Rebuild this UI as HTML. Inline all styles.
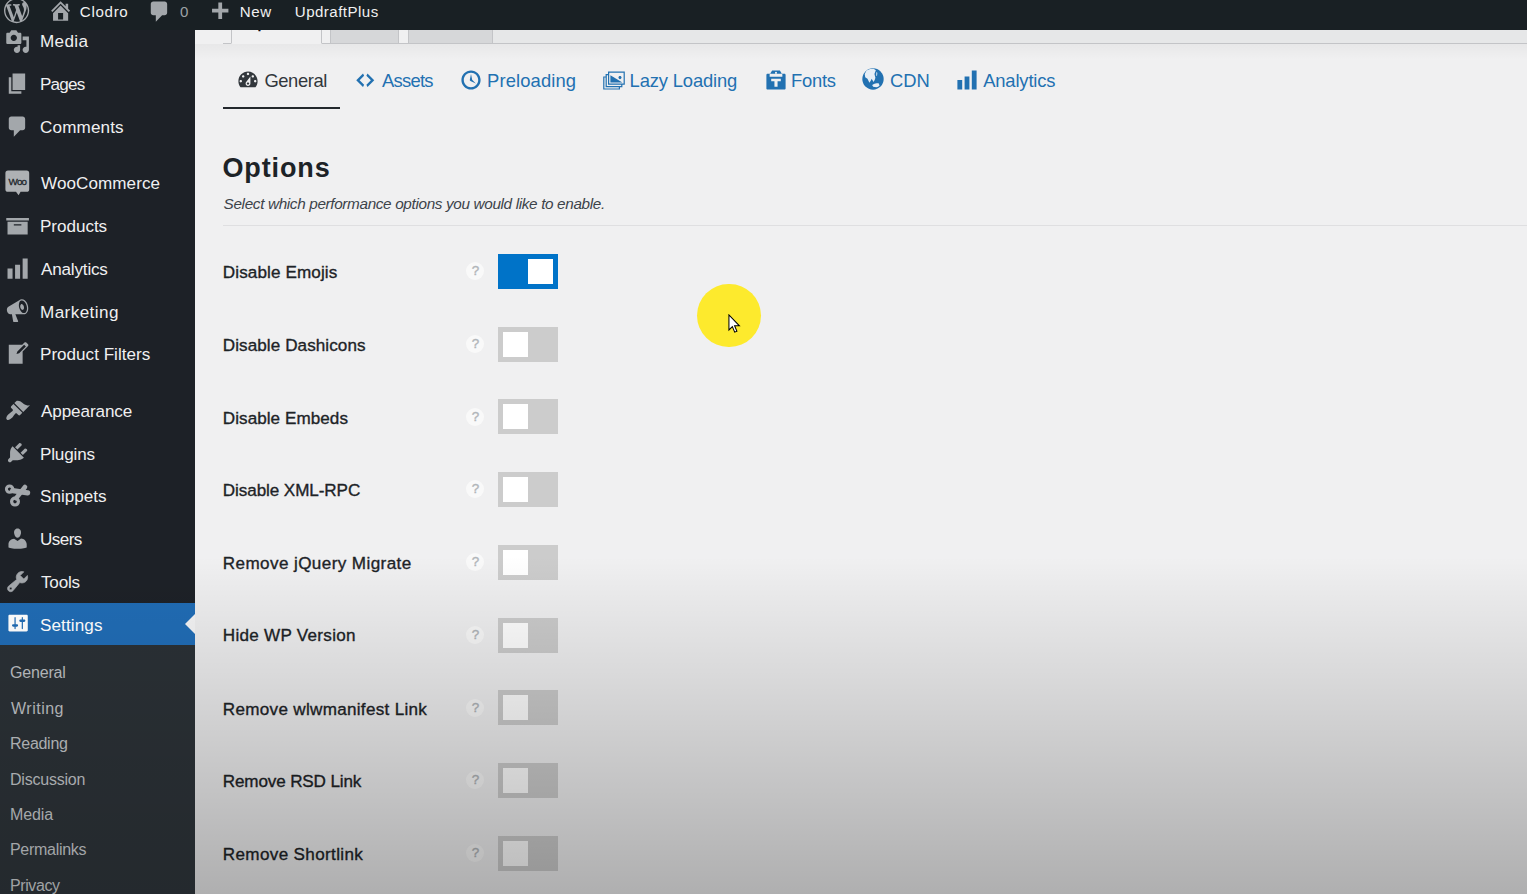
<!DOCTYPE html>
<html lang="en"><head><meta charset="utf-8"><title>Perfmatters &lsaquo; Clodro &mdash; WordPress</title>
<style>
*{box-sizing:border-box;margin:0;padding:0}
html,body{width:1527px;height:894px;overflow:hidden;background:#f0f0f1;font-family:"Liberation Sans",Arial,sans-serif}
#wrap{position:relative;width:1527px;height:894px;overflow:hidden}
.t{position:absolute;white-space:nowrap;line-height:1}
.i{position:absolute;display:block;overflow:visible}
#adminbar{position:absolute;left:0;top:0;width:1527px;height:29.7px;background:#192024;z-index:5}
#menu{position:absolute;left:0;top:0;width:195px;height:894px;background:#1d2127;z-index:3}
#submenu{position:absolute;left:0;top:644.6px;width:195px;height:260px;background:#2a3035}
.cur{position:absolute;left:0;width:195px;height:42px;background:#206bb3}
.arrow{position:absolute;left:185px;width:0;height:0;border:10.2px solid transparent;border-left-width:0;border-right:10px solid #f0f0f1}
#content{position:absolute;left:0;top:0;width:1527px;height:894px;z-index:1}
.tabline{position:absolute;left:222.7px;top:43px;width:1310px;height:1.3px;background:#c3c4c7}
.ntab{position:absolute;top:10px;height:34.3px;border:1.3px solid #c3c4c7;background:#d6d7d9;color:#50575e;font-size:17.2px;line-height:22.5px;padding-left:12px;white-space:nowrap;overflow:hidden;-webkit-text-stroke:.4px #50575e}
.ntab.act{background:#f0f0f1;border-bottom-color:#f0f0f1;color:#000;-webkit-text-stroke:.4px #000}
.strip{position:absolute;left:493px;top:29px;width:1040px;height:14px;background:#e6e7e8}
.tabsh{position:absolute;left:195px;top:44.3px;width:1340px;height:16px;background:linear-gradient(to bottom,rgba(0,0,0,.035),rgba(0,0,0,0))}
.uline{position:absolute;left:222.9px;top:106.8px;width:117.3px;height:2.5px;background:#23282d}
.hr{position:absolute;left:222.7px;top:224.7px;width:1310px;height:1.3px;background:#dfdfe1}
.q{position:absolute;left:466.4px;width:18px;height:18px;border-radius:50%;background:#f9f9f9;color:#b1b5b9;font-size:13.4px;line-height:18.4px;text-align:center;-webkit-text-stroke:.4px #b1b5b9}
.tg{position:absolute;left:498.1px;width:59.9px;height:35.2px;background:#cccccc}
.tg i{position:absolute;left:5px;top:5px;width:25.1px;height:25.1px;background:#fff}
.tg.on{background:#0073c8}
.tg.on i{left:29.9px}
#mouse{position:absolute;left:697px;top:283.7px;width:63.6px;height:63.6px;border-radius:50%;background:#fdea2d;z-index:2}
#ptr{position:absolute;left:728px;top:314.4px;z-index:2}
#shade{position:absolute;left:195px;top:0;width:1332px;height:894px;z-index:9;pointer-events:none;background:linear-gradient(to bottom,rgba(0,0,0,0) 556px,rgba(0,0,0,.27) 894px)}
#shade2{position:absolute;left:0;top:0;width:195px;height:894px;z-index:9;pointer-events:none;background:linear-gradient(to bottom,rgba(0,0,0,0) 556px,rgba(0,0,0,.14) 894px)}
</style></head>
<body><div id="wrap">
<div id="content">
<div class="strip"></div><div class="tabline"></div><div class="tabsh"></div>
<div class="ntab act" style="left:231.2px;width:90.8px">Options</div>
<div class="ntab" style="left:330px;width:69px">Tools</div>
<div class="ntab" style="left:408.2px;width:84.5px">License</div>
<div class="uline"></div>
<svg class="i" style="left:235.70px;top:67.80px" width="24" height="24" viewBox="0 0 20 20" fill="#32373c" fill-rule="evenodd"><path d="M3.76 16h12.48c1.1-1.37 1.76-3.11 1.76-5 0-4.42-3.58-8-8-8s-8 3.58-8 8c0 1.89.66 3.63 1.76 5zM10 4c.55 0 1 .45 1 1s-.45 1-1 1-1-.45-1-1 .45-1 1-1zM6 6c.55 0 1 .45 1 1s-.45 1-1 1-1-.45-1-1 .45-1 1-1zm8 0c.55 0 1 .45 1 1s-.45 1-1 1-1-.45-1-1 .45-1 1-1zm-5.37 5.55L12 7v6c0 1.1-.9 2-2 2s-2-.9-2-2c0-.57.24-1.08.63-1.45zM4 10c.55 0 1 .45 1 1s-.45 1-1 1-1-.45-1-1 .45-1 1-1zm12 0c.55 0 1 .45 1 1s-.45 1-1 1-1-.45-1-1 .45-1 1-1zm-5 3c0-.55-.45-1-1-1s-1 .45-1 1 .45 1 1 1 1-.45 1-1z"/></svg>
<span class="t" id="t0" style="left:264.40px;top:71.72px;font-size:18.4px;color:#32373c;letter-spacing:-0.400px;">General</span>
<svg class="i" style="left:353.85px;top:68.95px" width="22.5" height="22.5" viewBox="0 0 20 20" fill="#2271b1" fill-rule="evenodd"><path d="M9 6l-4 4 4 4-1 2-6-6 6-6zm2 8l4-4-4-4 1-2 6 6-6 6z"/></svg>
<span class="t" id="t1" style="left:382.00px;top:71.72px;font-size:18.4px;color:#2271b1;letter-spacing:-0.740px;">Assets</span>
<svg class="i" style="left:459.10px;top:67.70px" width="24" height="24" viewBox="0 0 20 20" fill="#2271b1" fill-rule="evenodd"><path d="M10 2c4.42 0 8 3.58 8 8s-3.58 8-8 8-8-3.58-8-8 3.58-8 8-8zm0 14c3.31 0 6-2.69 6-6s-2.69-6-6-6-6 2.69-6 6 2.69 6 6 6zm-.71-5.29c.07.05.14.1.23.15l-.02.02L14 13l-3.03-3.19L10 5l-.97 4.81h.01c0 .02-.01.05-.02.09S9 9.97 9 10c0 .28.1.52.29.71z"/></svg>
<span class="t" id="t2" style="left:487.00px;top:71.72px;font-size:18.4px;color:#2271b1;letter-spacing:0.122px;">Preloading</span>
<svg class="i" style="left:602.10px;top:67.90px" width="24" height="24" viewBox="0 0 20 20" fill="#2271b1" fill-rule="evenodd"><path d="M5 3h14v11h-2v2h-2v2H1V7h2V5h2V3zm13 10V4H6v9h12zm-3-3.700c.72 0 1.300-.58 1.300-1.300s-.58-1.300-1.300-1.300-1.300.58-1.300 1.300.58 1.300 1.300 1.300zm1 5.700v-1H5V6H4v9h12zM7 6l10 6H7V6zm7 11v-1H3V8H2v9h12z"/></svg>
<span class="t" id="t3" style="left:629.60px;top:71.72px;font-size:18.4px;color:#2271b1;letter-spacing:-0.155px;">Lazy Loading</span>
<svg class="i" style="left:764.00px;top:67.70px" width="24" height="24" viewBox="0 0 20 20" fill="#2271b1" fill-rule="evenodd"><path d="M3 4.8h14c.55 0 1 .45 1 1V17c0 .55-.45 1-1 1H3c-.55 0-1-.45-1-1V5.8c0-.55.45-1 1-1zM4.700 5.900v1.300h10.600V5.900zM6 8.900v2.100h2.700v4.700h2.600V11H14V8.900z M7.200 2h5.600c.3 0 .5.100.7.400l2 3.500H4.500l2-3.500c.2-.3.400-.400.700-.400zM10 3.100a.85.85 0 1 0 0 1.700.85.85 0 0 0 0-1.700z"/></svg>
<span class="t" id="t4" style="left:791.00px;top:71.72px;font-size:18.4px;color:#2271b1;letter-spacing:-0.250px;">Fonts</span>
<svg class="i" style="left:860.7px;top:66.7px" width="24" height="24" viewBox="0 0 20 20"><circle cx="10" cy="10" r="8.9" fill="#2271b1"/><path d="M3.1 5.8L4.6 2.9 7.5 1.6l3-.2 1.9 1.3-.6 1.500-.6 1.600.4 1.500.4 1.600-.5 1.800-1 1.700-.9-1.300-.7-1.400-.8 1.700-1.100 1.800-.8-1.700-.8-1.800-1.300-.700-.6-.500z M9.300 15.100l1.900-1.100 1.800-.5 1.700.1.800 1.900-1.200 1-1.500.3-2.700-.3z M12.800 4.200l.8.6-.2 2.200-.7.600z" fill="#e6eef6"/></svg>
<span class="t" id="t5" style="left:890.00px;top:71.72px;font-size:18.4px;color:#2271b1;letter-spacing:0.000px;">CDN</span>
<svg class="i" style="left:954.80px;top:67.90px" width="24" height="24" viewBox="0 0 20 20" fill="#2271b1" fill-rule="evenodd"><path d="M18 18V2h-4v16h4zm-6 0V7H8v11h4zm-6 0v-8H2v8h4z"/></svg>
<span class="t" id="t6" style="left:983.14px;top:71.72px;font-size:18.4px;color:#2271b1;letter-spacing:-0.147px;">Analytics</span>
<span class="t" id="h" style="left:222.40px;top:155.44px;font-size:27.0px;color:#1d2327;letter-spacing:0.887px;font-weight:700;">Options</span>
<span class="t" id="d" style="left:223.60px;top:196.35px;font-size:15.3px;color:#3c434a;letter-spacing:-0.346px;font-style:italic;">Select which performance options you would like to enable.</span>
<span class="t" id="r0" style="left:222.80px;top:263.82px;font-size:17.1px;color:#1d2327;letter-spacing:0.108px;-webkit-text-stroke:0.35px #1d2327;">Disable Emojis</span>
<span class="q" style="top:262.0px">?</span>
<div class="tg on" style="top:253.8px"><i></i></div>
<span class="t" id="r1" style="left:222.80px;top:336.82px;font-size:17.1px;color:#1d2327;letter-spacing:0.075px;-webkit-text-stroke:0.35px #1d2327;">Disable Dashicons</span>
<span class="q" style="top:334.8px">?</span>
<div class="tg" style="top:326.6px"><i></i></div>
<span class="t" id="r2" style="left:222.80px;top:409.82px;font-size:17.1px;color:#1d2327;letter-spacing:0.054px;-webkit-text-stroke:0.35px #1d2327;">Disable Embeds</span>
<span class="q" style="top:407.5px">?</span>
<div class="tg" style="top:399.3px"><i></i></div>
<span class="t" id="r3" style="left:222.80px;top:481.82px;font-size:17.1px;color:#1d2327;letter-spacing:-0.086px;-webkit-text-stroke:0.35px #1d2327;">Disable XML-RPC</span>
<span class="q" style="top:480.2px">?</span>
<div class="tg" style="top:472.1px"><i></i></div>
<span class="t" id="r4" style="left:222.80px;top:554.82px;font-size:17.1px;color:#1d2327;letter-spacing:0.395px;-webkit-text-stroke:0.35px #1d2327;">Remove jQuery Migrate</span>
<span class="q" style="top:553.0px">?</span>
<div class="tg" style="top:544.8px"><i></i></div>
<span class="t" id="r5" style="left:222.80px;top:626.82px;font-size:17.1px;color:#1d2327;letter-spacing:0.271px;-webkit-text-stroke:0.35px #1d2327;">Hide WP Version</span>
<span class="q" style="top:625.8px">?</span>
<div class="tg" style="top:617.5px"><i></i></div>
<span class="t" id="r6" style="left:222.80px;top:700.82px;font-size:17.1px;color:#1d2327;letter-spacing:0.295px;-webkit-text-stroke:0.35px #1d2327;">Remove wlwmanifest Link</span>
<span class="q" style="top:698.5px">?</span>
<div class="tg" style="top:690.3px"><i></i></div>
<span class="t" id="r7" style="left:222.80px;top:772.82px;font-size:17.1px;color:#1d2327;letter-spacing:-0.150px;-webkit-text-stroke:0.35px #1d2327;">Remove RSD Link</span>
<span class="q" style="top:771.2px">?</span>
<div class="tg" style="top:763.0px"><i></i></div>
<span class="t" id="r8" style="left:222.80px;top:845.82px;font-size:17.1px;color:#1d2327;letter-spacing:0.340px;-webkit-text-stroke:0.35px #1d2327;">Remove Shortlink</span>
<span class="q" style="top:844.0px">?</span>
<div class="tg" style="top:835.8px"><i></i></div>
<div class="hr"></div>
<div id="mouse"></div>
<svg id="ptr" width="13" height="19.5" viewBox="0 0 14 21"><path d="M1 1v16.2l3.7-3.6 2.5 5.9 2.4-1-2.500-5.800h5.200z" fill="#fff" stroke="#000" stroke-width="1.1" stroke-linejoin="miter"/></svg>
</div>
<div id="menu">
<div id="submenu"></div>
<svg class="i" style="left:4.50px;top:28.70px" width="25.2" height="25.2" viewBox="0 0 20 20" fill="#a3a7ab" fill-rule="evenodd"><path d="M13 11V4c0-.55-.45-1-1-1h-1.67L9 1H5L3.67 3H2c-.55 0-1 .45-1 1v7c0 .55.45 1 1 1h10c.55 0 1-.45 1-1zM7 4.5c1.38 0 2.5 1.12 2.5 2.5S8.38 9.5 7 9.5 4.5 8.38 4.5 7 5.62 4.5 7 4.5zM14 6h5v10.5c0 1.38-1.12 2.5-2.5 2.5S14 17.88 14 16.5s1.12-2.5 2.5-2.5c.17 0 .34.02.5.05V9h-3V6zm-4 8.05V13h2v3.5c0 1.38-1.12 2.5-2.5 2.5S7 17.88 7 16.5 8.12 14 9.5 14c.17 0 .34.02.5.05z"/></svg>
<span class="t" id="m0" style="left:40.00px;top:32.82px;font-size:17.1px;color:#f0f0f1;letter-spacing:0.350px;">Media</span>
<svg class="i" style="left:4.50px;top:70.80px" width="25.2" height="25.2" viewBox="0 0 20 20" fill="#a3a7ab" fill-rule="evenodd"><path d="M6 15V2h10v13H6zm-1 1h8v2H3V5h2v11z"/></svg>
<span class="t" id="m1" style="left:40.00px;top:75.82px;font-size:17.1px;color:#f0f0f1;letter-spacing:-0.798px;">Pages</span>
<svg class="i" style="left:4.50px;top:113.60px" width="25.2" height="25.2" viewBox="0 0 20 20" fill="#a3a7ab" fill-rule="evenodd"><path d="M5 2h9c1.1 0 2 .9 2 2v7c0 1.1-.9 2-2 2h-2l-5 5v-5H5c-1.1 0-2-.9-2-2V4c0-1.1.9-2 2-2z"/></svg>
<span class="t" id="m2" style="left:40.00px;top:118.82px;font-size:17.1px;color:#f0f0f1;letter-spacing:0.143px;">Comments</span>
<svg class="i" style="left:5.2px;top:169.5px" width="25" height="26" viewBox="0 0 25 26"><path d="M3 .6h18.6a2.6 2.6 0 0 1 2.6 2.6v16a2.6 2.6 0 0 1-2.6 2.6h-6l-2 3.4-2.6-3.4H3a2.6 2.6 0 0 1-2.6-2.6v-16A2.6 2.6 0 0 1 3 .6z" fill="#aeb1b4"/><text x="12.400" y="14.500" text-anchor="middle" font-family="Liberation Sans, sans-serif" font-weight="400" font-size="9.800" letter-spacing="-0.800" stroke="#20262b" stroke-width=".3" fill="#20262b">Woo</text></svg>
<span class="t" id="m3" style="left:41.00px;top:174.82px;font-size:17.1px;color:#f0f0f1;letter-spacing:0.060px;">WooCommerce</span>
<svg class="i" style="left:4.50px;top:213.20px" width="25.2" height="25.2" viewBox="0 0 20 20" fill="#a3a7ab" fill-rule="evenodd"><path d="M19 4v2H1V4h18zM2 7h16v10H2V7zm11 3V9H7v1h6z"/></svg>
<span class="t" id="m4" style="left:40.00px;top:217.82px;font-size:17.1px;color:#f0f0f1;letter-spacing:-0.043px;">Products</span>
<svg class="i" style="left:4.50px;top:255.80px" width="25.2" height="25.2" viewBox="0 0 20 20" fill="#a3a7ab" fill-rule="evenodd"><path d="M18 18V2h-4v16h4zm-6 0V7H8v11h4zm-6 0v-8H2v8h4z"/></svg>
<span class="t" id="m5" style="left:41.00px;top:260.82px;font-size:17.1px;color:#f0f0f1;letter-spacing:-0.188px;">Analytics</span>
<svg class="i" style="left:4.50px;top:297.80px" width="25.2" height="25.2" viewBox="0 0 20 20" fill="#a3a7ab" fill-rule="evenodd"><path d="M18.15 5.94c.46 1.62.38 3.22-.02 4.48-.42 1.28-1.26 2.18-2.3 2.48-.16.06-.26.06-.4.06-.06.02-.12.02-.18.02-.06.02-.14.02-.22.02h-6.8l2.22 5.5c.02.14-.06.26-.14.34-.08.1-.24.16-.34.16H6.95c-.1 0-.26-.06-.34-.16-.08-.08-.16-.2-.14-.34l-1-5.5H4.25l-.02-.02c-.5.06-1.08-.18-1.54-.62s-.88-1.08-1.06-1.88c-.24-.8-.2-1.56-.02-2.2.18-.62.58-1.08 1.06-1.3l.02-.02 9-5.4c.1-.06.18-.1.24-.16.06-.04.14-.08.24-.12.16-.08.28-.12.5-.18 1.04-.3 2.24.1 3.22.98s1.84 2.24 2.26 3.86zm-2.58 5.98h-.02c.4-.1.74-.34 1.04-.7.58-.7.86-1.76.86-3.04 0-.64-.1-1.3-.28-1.98-.34-1.36-1.02-2.5-1.78-3.24s-1.68-1.1-2.46-.88c-.82.22-1.4.96-1.7 2-.32 1.04-.28 2.36.06 3.72.38 1.36 1 2.5 1.8 3.24.78.74 1.62 1.1 2.48.88zm-2.54-7.08c.22-.04.42-.02.62.04.38.16.76.48 1.02 1s.42 1.2.42 1.78c0 .3-.04.56-.12.8-.18.48-.44.84-.86.94-.34.1-.8-.06-1.14-.4s-.64-.86-.78-1.5c-.18-.62-.12-1.24.02-1.72s.48-.84.82-.94z"/></svg>
<span class="t" id="m6" style="left:40.00px;top:303.82px;font-size:17.1px;color:#f0f0f1;letter-spacing:0.425px;">Marketing</span>
<svg class="i" style="left:4.50px;top:341.20px" width="25.2" height="25.2" viewBox="0 0 20 20" fill="#a3a7ab" fill-rule="evenodd"><path d="M16.89 1.2l1.41 1.41c.39.39.39 1.02 0 1.41L14 8.33V18H3V3h10.67l1.8-1.8c.4-.39 1.03-.4 1.42 0zm-5.66 8.48l5.37-5.36-1.42-1.42-5.36 5.37-.71 2.12z"/></svg>
<span class="t" id="m7" style="left:40.00px;top:345.82px;font-size:17.1px;color:#f0f0f1;letter-spacing:0.000px;">Product Filters</span>
<svg class="i" style="left:4.50px;top:397.80px" width="25.2" height="25.2" viewBox="0 0 20 20" fill="#a3a7ab" fill-rule="evenodd"><path d="M14.48 11.06L7.41 3.99l1.5-1.5c.5-.56 2.3-.47 3.51.32 1.21.8 1.43 1.28 2.91 2.1 1.18.64 2.45 1.26 4.45.85zm-.71.71L6.7 4.7 4.93 6.47c-.39.39-.39 1.02 0 1.41l1.06 1.06c.39.39.39 1.03 0 1.42-.6.6-1.43 1.11-2.21 1.69-.35.26-.7.53-1.01.84C1.43 14.23.4 16.08 1.4 17.07c.99 1 2.84-.03 4.18-1.36.31-.31.58-.66.85-1.02.57-.78 1.08-1.61 1.69-2.21.39-.39 1.02-.39 1.41 0l1.06 1.06c.39.39 1.02.39 1.41 0z"/></svg>
<span class="t" id="m8" style="left:41.00px;top:402.82px;font-size:17.1px;color:#f0f0f1;letter-spacing:-0.100px;">Appearance</span>
<svg class="i" style="left:4.50px;top:439.90px" width="25.2" height="25.2" viewBox="0 0 20 20" fill="#a3a7ab" fill-rule="evenodd"><path d="M13.11 4.36L9.87 7.6 8 5.73l3.24-3.24c.35-.34 1.05-.2 1.56.32.52.51.66 1.21.31 1.55zm-8 1.77l.91-1.12 9.01 9.01-1.19.84c-.71.71-2.63 1.16-3.82 1.16H6.14L4.9 17.26c-.59.59-1.54.59-2.12 0-.59-.58-.59-1.53 0-2.12l1.24-1.24v-3.88c0-1.13.4-3.19 1.09-3.89zm7.26 3.97l3.24-3.24c.34-.35 1.04-.21 1.55.31.52.51.66 1.21.31 1.55l-3.24 3.25z"/></svg>
<span class="t" id="m9" style="left:40.00px;top:445.82px;font-size:17.1px;color:#f0f0f1;letter-spacing:-0.167px;">Plugins</span>
<svg class="i" style="left:0;top:475.0px" width="40" height="40" viewBox="0 0 40 40" fill="none" stroke="#a3a7ab"><circle cx="9.6" cy="14.1" r="3.2" stroke-width="3"/><circle cx="15" cy="26.6" r="3.400" stroke-width="3.200"/><path d="M12.600 15.600L27.600 17.900" stroke-width="5.200" stroke-linecap="round"/><path d="M16.200 23.200L25 12" stroke-width="4.600" stroke-linecap="round"/></svg>
<span class="t" id="m10" style="left:40.00px;top:487.82px;font-size:17.1px;color:#f0f0f1;letter-spacing:0.000px;">Snippets</span>
<svg class="i" style="left:4.50px;top:526.40px" width="25.2" height="25.2" viewBox="0 0 20 20" fill="#a3a7ab" fill-rule="evenodd"><path d="M10 9.25c-2.27 0-2.73-3.44-2.73-3.44C7 4.02 7.82 2 9.97 2c2.16 0 2.98 2.02 2.71 3.81 0 0-.41 3.44-2.68 3.44zm0 2.57L12.72 10c2.39 0 4.52 2.33 4.52 4.53v2.49s-3.65 1.13-7.24 1.13c-3.65 0-7.24-1.13-7.24-1.13v-2.49c0-2.25 1.94-4.48 4.47-4.48z"/></svg>
<span class="t" id="m11" style="left:40.00px;top:530.82px;font-size:17.1px;color:#f0f0f1;letter-spacing:-0.575px;">Users</span>
<svg class="i" style="left:4.50px;top:568.60px" width="25.2" height="25.2" viewBox="0 0 20 20" fill="#a3a7ab" fill-rule="evenodd" stroke="#a3a7ab" stroke-width=".55"><path d="M16.68 9.77c-1.34 1.34-3.3 1.67-4.95.99l-5.41 6.52c-.99.99-2.59.99-3.58 0s-.99-2.59 0-3.57l6.52-5.42c-.68-1.65-.35-3.61.99-4.95 1.28-1.28 3.12-1.62 4.72-1.06l-2.89 2.89 2.82 2.82 2.86-2.87c.53 1.58.18 3.39-1.08 4.65zM3.81 16.21c.4.39 1.04.39 1.43 0 .4-.4.4-1.04 0-1.43-.39-.4-1.03-.4-1.43 0-.39.39-.39 1.03 0 1.43z"/></svg>
<span class="t" id="m12" style="left:41.00px;top:573.82px;font-size:17.1px;color:#f0f0f1;letter-spacing:-0.200px;">Tools</span>
<div class="cur" style="top:602.6px"></div>
<div class="arrow" style="top:613.8px"></div>
<svg class="i" style="left:6.40px;top:611.20px" width="24.2" height="24.2" viewBox="0 0 20 20" fill="#ffffff" fill-rule="evenodd"><path d="M18 16V4c0-.55-.45-1-1-1H3c-.55 0-1 .45-1 1v12c0 .55.45 1 1 1h14c.55 0 1-.45 1-1zM8 11h1c.55 0 1 .45 1 1s-.45 1-1 1H8v1.5c0 .28-.22.5-.5.5s-.5-.22-.5-.5V13H6c-.55 0-1-.45-1-1s.45-1 1-1h1V5.5c0-.28.22-.5.5-.5s.5.22.5.5V11zm5-2h-1c-.55 0-1-.45-1-1s.45-1 1-1h1V5.5c0-.28.22-.5.5-.5s.5.22.5.5V7h1c.55 0 1 .45 1 1s-.45 1-1 1h-1v5.5c0 .28-.22.5-.5.5s-.5-.22-.5-.5V9z"/></svg>
<span class="t" id="m13" style="left:40.00px;top:616.82px;font-size:17.1px;color:#ffffff;letter-spacing:0.100px;">Settings</span>
<span class="t" id="s0" style="left:10.00px;top:664.76px;font-size:16.0px;color:#b9bcbf;letter-spacing:-0.183px;">General</span>
<span class="t" id="s1" style="left:11.00px;top:700.76px;font-size:16.0px;color:#b9bcbf;letter-spacing:0.500px;">Writing</span>
<span class="t" id="s2" style="left:10.00px;top:735.76px;font-size:16.0px;color:#b9bcbf;letter-spacing:-0.283px;">Reading</span>
<span class="t" id="s3" style="left:10.00px;top:771.76px;font-size:16.0px;color:#b9bcbf;letter-spacing:-0.211px;">Discussion</span>
<span class="t" id="s4" style="left:10.00px;top:806.76px;font-size:16.0px;color:#b9bcbf;letter-spacing:-0.125px;">Media</span>
<span class="t" id="s5" style="left:10.00px;top:841.76px;font-size:16.0px;color:#b9bcbf;letter-spacing:-0.300px;">Permalinks</span>
<span class="t" id="s6" style="left:10.00px;top:877.76px;font-size:16.0px;color:#b9bcbf;letter-spacing:-0.400px;">Privacy</span>
</div>
<div id="adminbar">
<svg class="i" style="left:3.90px;top:-2.20px" width="25.2" height="25.2" viewBox="0 0 20 20" fill="#a3a7ab" fill-rule="evenodd"><path d="M20 10c0-5.51-4.49-10-10-10C4.48 0 0 4.49 0 10c0 5.52 4.48 10 10 10 5.51 0 10-4.48 10-10zM7.78 15.37L4.37 6.22c.55-.02 1.17-.08 1.17-.08.5-.06.44-1.13-.06-1.11 0 0-1.45.11-2.37.11-.18 0-.37 0-.58-.01C4.12 2.69 6.87 1.11 10 1.11c2.33 0 4.45.87 6.05 2.34-.68-.11-1.65.39-1.65 1.58 0 .74.45 1.36.9 2.1.35.61.55 1.36.55 2.46 0 1.49-1.4 5-1.4 5l-3.03-8.37c.54-.02.82-.17.82-.17.5-.05.44-1.25-.06-1.22 0 0-1.44.12-2.38.12-.87 0-2.33-.12-2.33-.12-.5-.03-.56 1.2-.06 1.22l.92.08 1.26 3.41zM17.41 10c.24-.64.74-1.87.43-4.25.7 1.29 1.05 2.71 1.05 4.25 0 3.29-1.73 6.24-4.4 7.78.97-2.59 1.94-5.2 2.92-7.78zM6.1 18.09C3.12 16.65 1.11 13.53 1.11 10c0-1.3.23-2.48.72-3.59C3.25 10.3 4.67 14.2 6.1 18.09zm4.03-6.63l2.58 6.98c-.86.29-1.76.45-2.71.45-.79 0-1.57-.11-2.29-.33.81-2.38 1.62-4.74 2.42-7.1z"/></svg>
<svg class="i" style="left:47.60px;top:-1.90px" width="25.2" height="25.2" viewBox="0 0 20 20" fill="#a3a7ab" fill-rule="evenodd"><path d="M16 8.5l1.53 1.53-1.06 1.06L10 4.62l-6.47 6.47-1.06-1.06L10 2.5l4 4v-2h2v4zm-6-2.46l6 5.99V18H4v-5.97zM12 17v-5H8v5h4z"/></svg>
<span class="t" id="a0" style="left:79.80px;top:3.52px;font-size:15.1px;color:#f0f0f1;letter-spacing:0.700px;">Clodro</span>
<svg class="i" style="left:147.00px;top:-1.20px" width="25.2" height="25.2" viewBox="0 0 20 20" fill="#a3a7ab" fill-rule="evenodd"><path d="M5 2h9c1.1 0 2 .9 2 2v7c0 1.1-.9 2-2 2h-2l-5 5v-5H5c-1.1 0-2-.9-2-2V4c0-1.1.9-2 2-2z"/></svg>
<span class="t" id="a1" style="left:180.00px;top:3.52px;font-size:15.1px;color:#9da1a5;letter-spacing:0.000px;">0</span>
<svg class="i" style="left:207.20px;top:-0.50px" width="25.2" height="25.2" viewBox="0 0 20 20" fill="#a3a7ab" fill-rule="evenodd"><path d="M17 7v3h-5v5H9v-5H4V7h5V2h3v5h5z"/></svg>
<span class="t" id="a2" style="left:239.80px;top:3.52px;font-size:15.1px;color:#f0f0f1;letter-spacing:0.600px;">New</span>
<span class="t" id="a3" style="left:294.80px;top:3.52px;font-size:15.1px;color:#f0f0f1;letter-spacing:0.460px;">UpdraftPlus</span>
</div>
<div id="shade"></div><div id="shade2"></div>
</div></body></html>
